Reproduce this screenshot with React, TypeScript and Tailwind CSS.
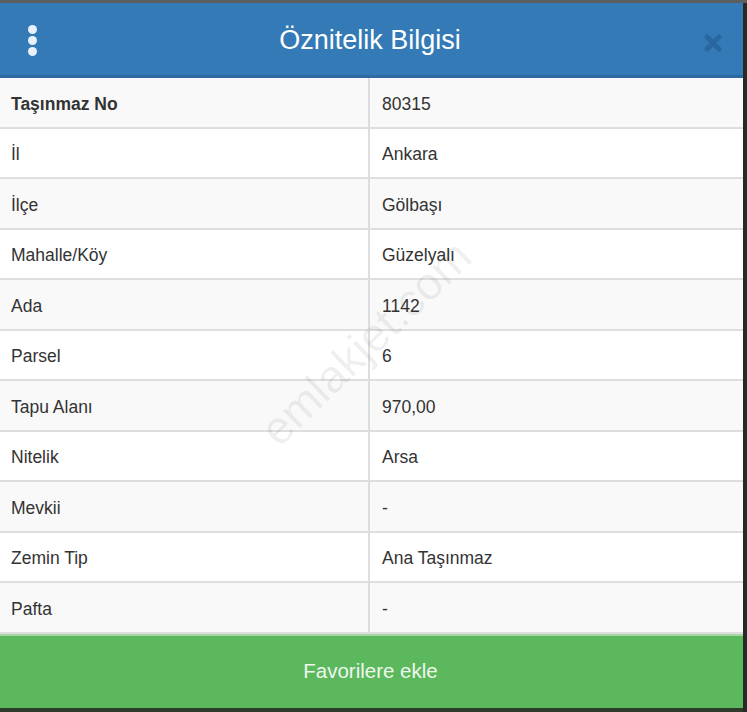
import React from "react";

const rows: [string, string][] = [
  ["Taşınmaz No", "80315"],
  ["İl", "Ankara"],
  ["İlçe", "Gölbaşı"],
  ["Mahalle/Köy", "Güzelyalı"],
  ["Ada", "1142"],
  ["Parsel", "6"],
  ["Tapu Alanı", "970,00"],
  ["Nitelik", "Arsa"],
  ["Mevkii", "-"],
  ["Zemin Tip", "Ana Taşınmaz"],
  ["Pafta", "-"],
];

export default function App() {
  return (
    <div
      className="relative w-[747px] h-[712px] overflow-hidden bg-[#2b3327] flex flex-col"
      style={{ fontFamily: '"Liberation Sans", Arial, sans-serif' }}
    >
      <div className="h-[3px] w-full bg-[#5b5f60] shrink-0" />
      <div className="flex flex-row flex-1">
        <div className="w-[743px] flex flex-col bg-white">
          {/* Header */}
          <div className="relative h-[75px] shrink-0 bg-[#337ab7] border-b-[3px] border-[#2d6aa0] flex items-center justify-center">
            <div className="absolute left-[28px] top-[22px] flex flex-col gap-[2px]">
              <span className="block w-[9px] h-[9px] rounded-full bg-[#e8f1fb]" />
              <span className="block w-[9px] h-[9px] rounded-full bg-[#e8f1fb]" />
              <span className="block w-[9px] h-[9px] rounded-full bg-[#e8f1fb]" />
            </div>
            <h1 className="text-[27px] leading-none text-white font-normal mt-[3px] -ml-[3px]">
              Öznitelik Bilgisi
            </h1>
            <svg
              className="absolute left-[703px] top-[30px]"
              width="20"
              height="20"
              viewBox="0 0 20 20"
            >
              <path
                d="M4 4 L16 16 M16 4 L4 16"
                stroke="#2a67a0"
                strokeWidth="5"
                strokeLinecap="round"
              />
            </svg>
          </div>
          {/* Table */}
          <div className="flex flex-col relative">
            {rows.map(([k, v], i) => (
              <div
                key={k}
                className={`flex h-[50.5px] border-b-2 border-[#dedede] text-[17.5px] text-[#333333] ${
                  i % 2 === 0 ? "bg-[#f9f9f9]" : "bg-white"
                }`}
              >
                <div
                  className={`w-[370px] border-r-2 border-[#dddddd] px-[11px] pt-[3px] flex items-center ${
                    i === 0 ? "font-bold" : ""
                  }`}
                >
                  {k}
                </div>
                <div className="flex-1 px-[12px] pt-[3px] flex items-center">{v}</div>
              </div>
            ))}
            <div
              className="pointer-events-none absolute left-[366px] top-[265px] -translate-x-1/2 -translate-y-1/2 -rotate-[44deg] text-[46px] text-black/[0.07] whitespace-nowrap"
            >
              emlakjet.com
            </div>
          </div>
          {/* Button */}
          <div className="h-[74px] shrink-0 bg-[#5cb85c] border-t-2 border-[#a9d6a9] flex items-center justify-center">
            <span className="text-[20.5px] text-[#eef7ee] -ml-[2px]">Favorilere ekle</span>
          </div>
          <div className="flex-1 bg-[#2f3b2a]" />
        </div>
        <div className="flex-1 bg-[#262a25]" />
      </div>
    </div>
  );
}
